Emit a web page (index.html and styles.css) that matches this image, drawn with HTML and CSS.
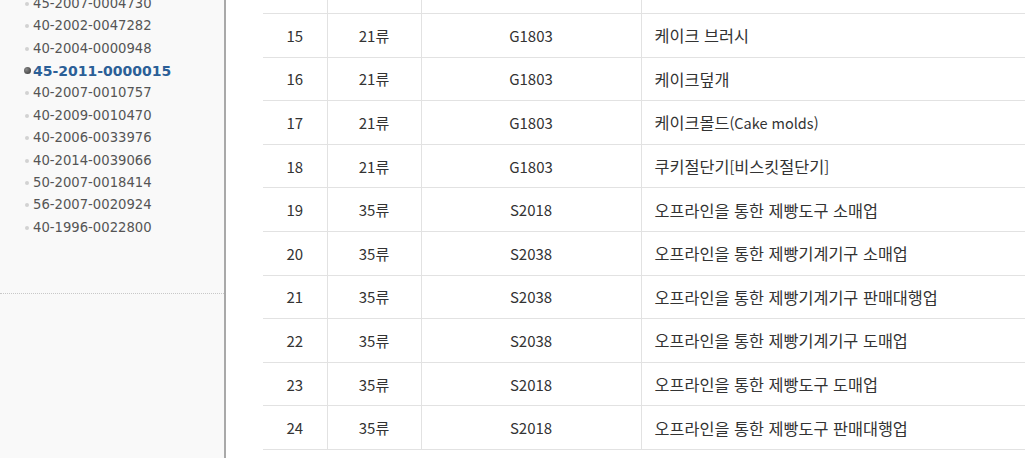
FILE: index.html
```html
<!DOCTYPE html>
<html lang="ko">
<head>
<meta charset="utf-8">
<link rel="stylesheet" href="styles.css">
</head>
<body>
<div class="page">
  <aside class="sidebar">
    <ul class="tm-list">
      <li>45-2007-0004730</li>
      <li>40-2002-0047282</li>
      <li>40-2004-0000948</li>
      <li class="active">45-2011-0000015</li>
      <li>40-2007-0010757</li>
      <li>40-2009-0010470</li>
      <li>40-2006-0033976</li>
      <li>40-2014-0039066</li>
      <li>50-2007-0018414</li>
      <li>56-2007-0020924</li>
      <li>40-1996-0022800</li>
    </ul>
    <div class="divider"></div>
  </aside>
  <main class="main">
    <table class="goods">
      <colgroup>
        <col class="c-no"><col class="c-cls"><col class="c-code"><col class="c-name">
      </colgroup>
      <tbody>
        <tr class="cut"><td>14</td><td>21류</td><td>G1803</td><td class="name"></td></tr>
        <tr><td>15</td><td>21류</td><td>G1803</td><td class="name">케이크 브러시</td></tr>
        <tr><td>16</td><td>21류</td><td>G1803</td><td class="name">케이크덮개</td></tr>
        <tr><td>17</td><td>21류</td><td>G1803</td><td class="name">케이크몰드<span class="lat">(Cake molds)</span></td></tr>
        <tr><td>18</td><td>21류</td><td>G1803</td><td class="name">쿠키절단기<span class="lat">[</span>비스킷절단기<span class="lat">]</span></td></tr>
        <tr><td>19</td><td>35류</td><td>S2018</td><td class="name">오프라인을 통한 제빵도구 소매업</td></tr>
        <tr><td>20</td><td>35류</td><td>S2038</td><td class="name">오프라인을 통한 제빵기계기구 소매업</td></tr>
        <tr><td>21</td><td>35류</td><td>S2038</td><td class="name">오프라인을 통한 제빵기계기구 판매대행업</td></tr>
        <tr><td>22</td><td>35류</td><td>S2038</td><td class="name">오프라인을 통한 제빵기계기구 도매업</td></tr>
        <tr><td>23</td><td>35류</td><td>S2018</td><td class="name">오프라인을 통한 제빵도구 도매업</td></tr>
        <tr><td>24</td><td>35류</td><td>S2018</td><td class="name">오프라인을 통한 제빵도구 판매대행업</td></tr>
      </tbody>
    </table>
  </main>
</div>
</body>
</html>
```

FILE: styles.css
```css
html, body {
  margin: 0;
  padding: 0;
  height: 100%;
  overflow: hidden;
  background: #fff;
}
.page {
  display: flex;
  height: 100%;
}
.sidebar {
  width: 224px;
  flex: none;
  background: #f9f9f9;
  border-right: 2px solid #a9a9a9;
  overflow: hidden;
}
.tm-list {
  list-style: none;
  margin: -7.2px 0 0 0;
  padding: 0 0 0 33px;
  font-family: "DejaVu Sans", sans-serif;
  font-size: 13.2px;
  color: #555;
}
.tm-list li {
  position: relative;
  line-height: 22.4px;
  height: 22.4px;
  white-space: nowrap;
}
.tm-list li::before {
  content: "";
  position: absolute;
  left: -8px;
  top: 9px;
  width: 4px;
  height: 4px;
  border-radius: 50%;
  background: #d2d2d2;
}
.tm-list li.active {
  font-weight: bold;
  color: #2b5f97;
  font-size: 14px;
}
.tm-list li.active::before {
  left: -9px;
  top: 7px;
  width: 7px;
  height: 7px;
  border-radius: 50%;
  background: radial-gradient(circle at 35% 35%, #888, #333);
}
.divider {
  margin-top: 54px;
  border-top: 1px dotted #c8c8c8;
}
.main {
  flex: 1;
  padding-left: 37px;
  overflow: hidden;
}
.goods {
  border-collapse: collapse;
  margin-top: -29.6px;
  width: 800px;
  table-layout: fixed;
  font-family: "Noto Sans CJK KR", sans-serif;
  font-size: 15px;
  color: #333;
}
.c-no { width: 64px; }
.c-cls { width: 94px; }
.c-code { width: 220px; }
.goods td {
  height: 42.6px;
  padding: 0;
  text-align: center;
  vertical-align: middle;
  border-bottom: 1px solid #e2e2e2;
  border-left: 1px solid #e2e2e2;
  white-space: nowrap;
}
.goods td:first-child {
  border-left: none;
}
.goods td.name {
  text-align: left;
  padding-left: 13px;
  font-size: 16.3px;
}
.goods td.name .lat {
  font-size: 14.5px;
}
```
